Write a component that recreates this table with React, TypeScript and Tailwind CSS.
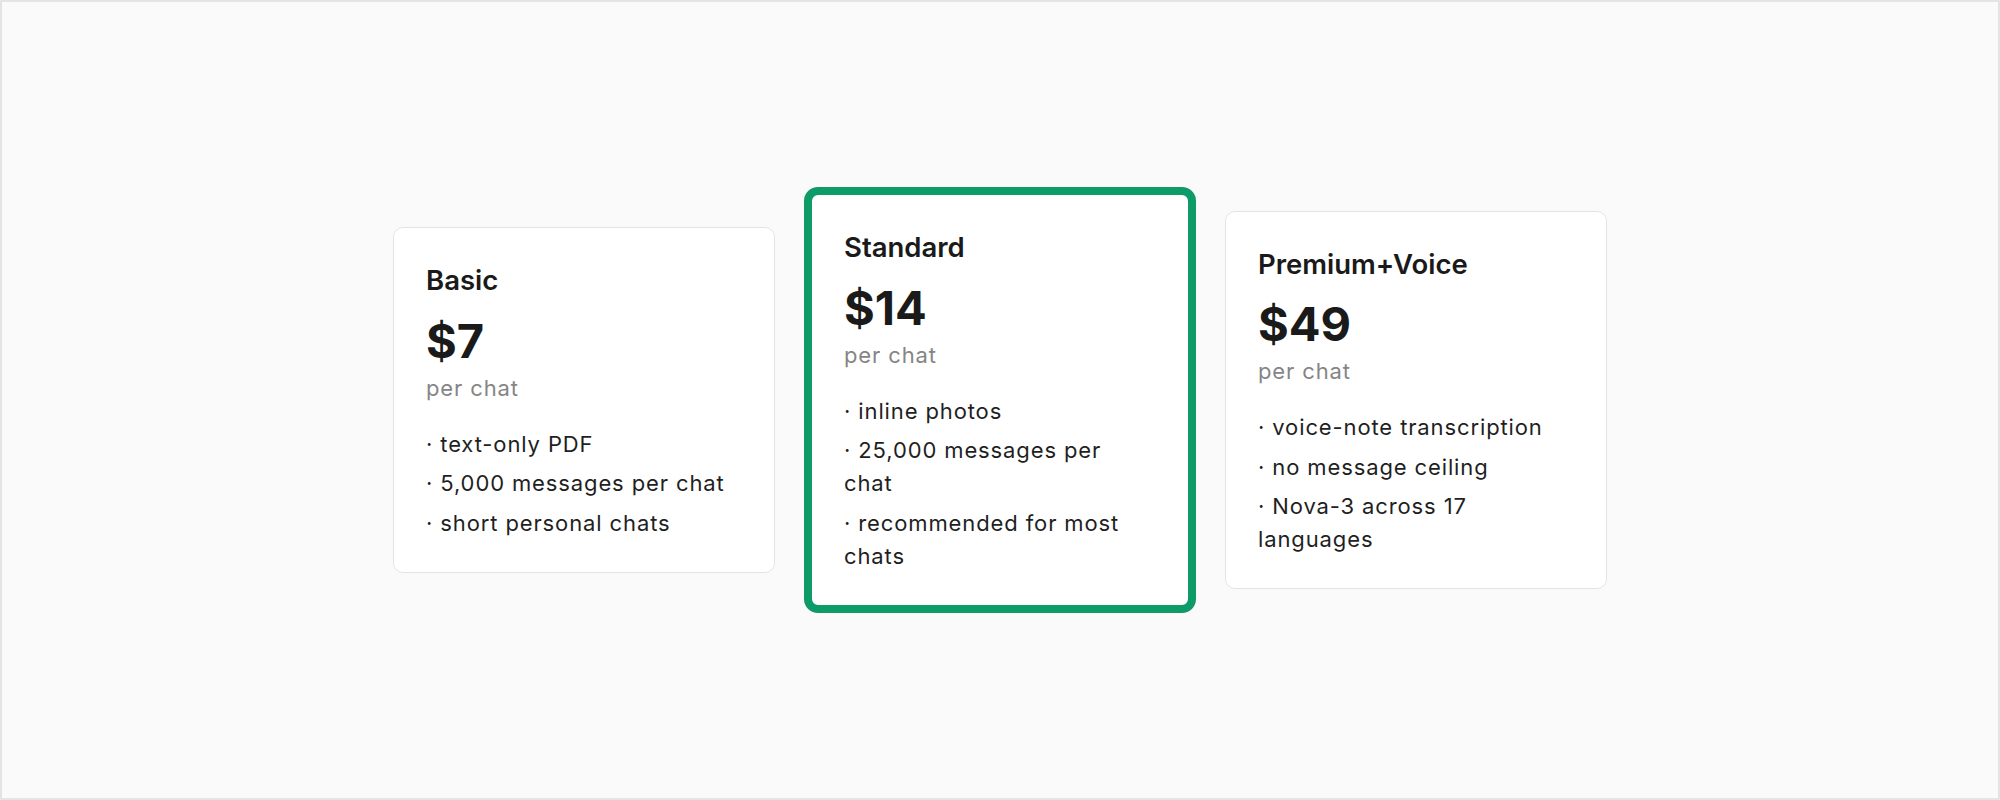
import React from "react";

type Plan = { name: string; price: string; features: string[]; featured?: boolean };

const plans: Plan[] = [
  { name: "Basic", price: "$7", features: ["text-only PDF", "5,000 messages per chat", "short personal chats"] },
  {
    name: "Standard",
    price: "$14",
    features: ["inline photos", "25,000 messages per chat", "recommended for most chats"],
    featured: true,
  },
  {
    name: "Premium+Voice",
    price: "$49",
    features: ["voice-note transcription", "no message ceiling", "Nova-3 across 17 languages"],
  },
];

function Card({ plan }: { plan: Plan }) {
  return (
    <div
      className={
        plan.featured
          ? "w-[392px] rounded-[14px] border-[8px] border-[#0e9b67] bg-white px-[32px] py-[32px]"
          : "w-[382px] rounded-[10px] border border-[#e4e4e4] bg-white px-[32px] py-[32px]"
      }
    >
      <div className="text-[27.5px] leading-[40px] font-semibold text-[#1a1a1a]">{plan.name}</div>
      <div className="mt-[16.5px] text-[47px] leading-[48px] font-bold text-[#1a1a1a]">{plan.price}</div>
      <div className="mt-[7px] text-[22px] leading-[33px] tracking-[0.04em] text-[#858585]">per chat</div>
      <ul className="mt-[23px] flex flex-col gap-[6.5px]">
        {plan.features.map((f) => (
          <li key={f} className="text-[22px] leading-[33px] tracking-[0.04em] text-[#1f1f1f]">
            · {f}
          </li>
        ))}
      </ul>
    </div>
  );
}

export default function App() {
  return (
    <div
      className="flex h-[800px] w-full items-center justify-center gap-[29px] border-2 border-[#e4e4e4] bg-[#fafafa]"
      style={{ fontFamily: "Inter, 'Noto Sans', sans-serif" }}
    >
      {plans.map((p) => (
        <Card key={p.name} plan={p} />
      ))}
    </div>
  );
}
